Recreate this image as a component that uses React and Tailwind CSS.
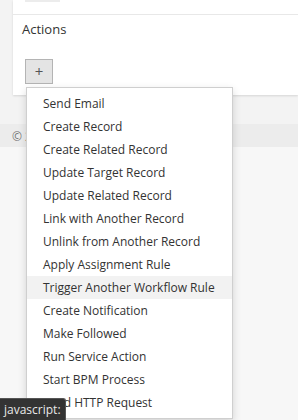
import React from "react";

const ITEMS = [
  "Send Email",
  "Create Record",
  "Create Related Record",
  "Update Target Record",
  "Update Related Record",
  "Link with Another Record",
  "Unlink from Another Record",
  "Apply Assignment Rule",
  "Trigger Another Workflow Rule",
  "Create Notification",
  "Make Followed",
  "Run Service Action",
  "Start BPM Process",
  "Send HTTP Request",
];

export default function App() {
  return (
    <div
      className="relative h-[420px] w-[298px] overflow-hidden bg-[#f7f7f7] text-[#333]"
      style={{ fontFamily: '"Open Sans", "Liberation Sans", sans-serif' }}
    >
      <div className="bg-[#f3f3f3] pb-[29px] pl-[13px]">
        {/* panel */}
        <div className="bg-white shadow-[0_1px_2px_rgba(0,0,0,0.12)]">
          <div className="border-b border-[#e8e8e8] pl-[12px]">
            <div className="h-[2px] w-[35px] bg-[#ececec]" />
            <div className="h-[12px]" />
          </div>
          <div className="px-[9px] pb-[11px] pt-[4px]">
            <div className="text-[13px] leading-[20px]">Actions</div>
            <div className="h-[20px]" />
            <button className="ml-[3px] flex h-[25px] w-[28px] items-center justify-center border border-[#b4b4b4] bg-[#e4e4e4] text-[15px] leading-none text-[#555]">
              +
            </button>
          </div>
        </div>
      </div>
      {/* footer */}
      <div className="h-[23px] bg-[#ececec] pl-[12px] pt-[3px] text-[12px] leading-[20px] text-[#777]">
        © 2
      </div>

      {/* dropdown */}
      <div className="absolute left-[26px] top-[87px] w-[207px] border border-[#cfcfcf] bg-white py-[4px] shadow-[0_3px_8px_rgba(0,0,0,0.15)]">
        {ITEMS.map((t) => (
          <div
            key={t}
            className={`h-[23px] pl-[16px] text-[12px] leading-[23px] text-[#333] ${
              t === "Trigger Another Workflow Rule" ? "bg-[#f2f2f2]" : ""
            }`}
          >
            {t}
          </div>
        ))}
      </div>

      {/* status tooltip */}
      <div className="absolute bottom-0 left-0 h-[22px] rounded-tr-[3px] border-t border-r border-[#555] bg-[#333] px-[4px] text-[12px] leading-[21px] text-[#e8e8e8]">
        javascript:
      </div>
    </div>
  );
}
